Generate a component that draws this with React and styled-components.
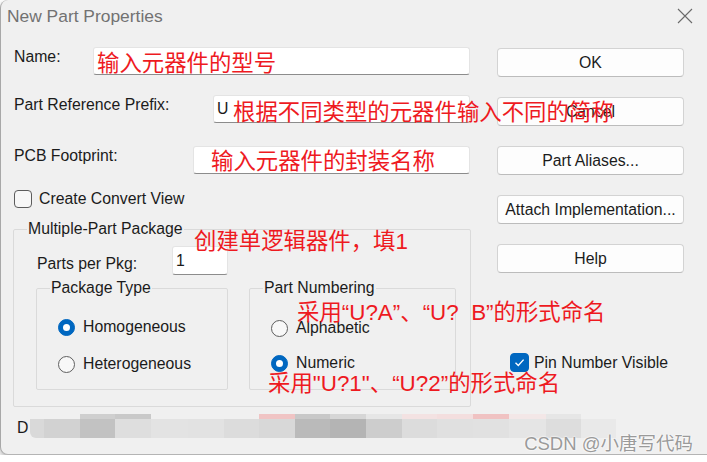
import React from 'react';
import styled, { createGlobalStyle } from 'styled-components';

const GlobalStyle = createGlobalStyle`
  html, body {
    margin: 0;
    padding: 0;
    background: #ffffff;
    overflow: hidden;
  }
  body {
    font-family: "Liberation Sans", Arial, sans-serif;
  }
`;

const TEXT = '15.8px';

const Window = styled.div`
  position: relative;
  width: 100%;
  height: 455px;
  box-sizing: border-box;
  background: #f0f0f0;
  border-left: 1px solid #a8a8a8;
  border-bottom: 1px solid #b4b4b4;
  border-radius: 8px 0 0 8px;
  box-shadow: 0 3px 6px rgba(0, 0, 0, 0.3);
  display: flex;
  flex-direction: column;
`;

const TitleBar = styled.div`
  height: 32px;
  flex-shrink: 0;
  display: flex;
  align-items: center;
  justify-content: space-between;
  padding: 0 14px 0 6px;
`;

const Title = styled.span`
  font-size: 17.4px;
  color: #727272;
`;

const Content = styled.div`
  display: flex;
  padding: 15px 0 0 12px;
`;

const LeftColumn = styled.div`
  width: 457px;
  display: flex;
  flex-direction: column;
`;

const RightColumn = styled.div`
  width: 187px;
  margin-left: 27px;
  padding-top: 1px;
  display: flex;
  flex-direction: column;
  gap: 20px;
`;

const FieldRow = styled.div`
  display: flex;
  align-items: flex-start;
  margin-top: ${({ $top }) => $top || 0}px;
`;

const Label = styled.span`
  width: ${({ $w }) => $w}px;
  flex-shrink: 0;
  padding: ${({ $pt }) => $pt || 1}px 0 0 1px;
  box-sizing: border-box;
  font-size: ${TEXT};
  color: #1b1b1b;
`;

const TextInput = styled.input`
  flex: ${({ $w }) => ($w ? 'none' : 1)};
  width: ${({ $w }) => ($w ? `${$w}px` : 'auto')};
  min-width: 0;
  height: ${({ $h }) => $h || 28}px;
  box-sizing: border-box;
  margin: 0;
  padding: 0 3px;
  border: 1px solid #e4e4e4;
  border-bottom: 1px solid #8c8c8c;
  border-radius: 3px;
  background: #ffffff;
  font-family: "Liberation Sans", Arial, sans-serif;
  font-size: ${TEXT};
  color: #1b1b1b;
  outline: none;
`;

const CheckRow = styled.label`
  display: flex;
  align-items: center;
  gap: ${({ $gap }) => $gap || 7}px;
  margin: ${({ $top }) => $top || 0}px 0 0 ${({ $left }) => $left || 0}px;
  font-size: ${TEXT};
  color: #1b1b1b;
`;

const Box = styled.span`
  width: ${({ $size }) => $size}px;
  height: ${({ $size }) => $size}px;
  box-sizing: border-box;
  border-radius: 4px;
  border: 1px solid ${({ $on }) => ($on ? '#0067c0' : '#5c5c5c')};
  background: ${({ $on }) => ($on ? '#0067c0' : '#f7f7f7')};
  display: grid;
  place-items: center;
  flex-shrink: 0;
`;

const GroupBox = styled.fieldset`
  margin: ${({ $top }) => $top || 0}px 0 0 0;
  padding: 0;
  width: ${({ $w }) => $w}px;
  box-sizing: border-box;
  min-width: 0;
  border: 1px solid #dadada;
  border-radius: 2px;
`;

const Legend = styled.legend`
  margin-left: 13px;
  padding: 0 1px;
  font-size: ${TEXT};
  line-height: 18px;
  color: #1b1b1b;
`;

const GroupBody = styled.div`
  display: flex;
  flex-direction: column;
  gap: ${({ $gap }) => $gap || 0}px;
  padding: ${({ $pad }) => $pad};
`;

const SubGroups = styled.div`
  display: flex;
  gap: 21px;
  margin-top: 4px;
`;

const RadioRow = styled.label`
  display: flex;
  align-items: center;
  gap: 8px;
  height: 20px;
  font-size: ${TEXT};
  color: #1b1b1b;
`;

const Radio = styled.span`
  width: 17px;
  height: 17px;
  box-sizing: border-box;
  border-radius: 50%;
  border: 1px solid ${({ $on }) => ($on ? '#0067c0' : '#5f5f5f')};
  background: ${({ $on }) => ($on ? '#0067c0' : '#f8f8f8')};
  display: grid;
  place-items: center;
  flex-shrink: 0;

  &::after {
    content: '';
    display: ${({ $on }) => ($on ? 'block' : 'none')};
    width: 7px;
    height: 7px;
    border-radius: 50%;
    background: #ffffff;
  }
`;

const Button = styled.button`
  width: 100%;
  height: 29px;
  margin: 0;
  padding: 0;
  background: #fdfdfd;
  border: 1px solid #d3d3d3;
  border-bottom-color: #bcbcbc;
  border-radius: 4px;
  font-family: "Liberation Sans", Arial, sans-serif;
  font-size: ${TEXT};
  color: #1b1b1b;
`;

const PinRow = styled(CheckRow)`
  margin-top: 60px;
`;

const BottomRow = styled.div`
  display: flex;
  align-items: flex-start;
  margin-top: 7px;
  padding-left: 16px;
`;

const Letter = styled.span`
  font-size: ${TEXT};
  line-height: 15px;
  margin-top: 6px;
  color: #1b1b1b;
`;

const Mosaic = styled.div`
  display: flex;
  margin-left: 2px;
  border-bottom-left-radius: 6px;
  overflow: hidden;
`;

const Tile = styled.div`
  width: ${({ $w }) => $w}px;
  display: flex;
  flex-direction: column;

  &::before {
    content: '';
    height: 5px;
    background: ${({ $top }) => $top};
  }

  &::after {
    content: '';
    height: 19px;
    background: ${({ $main }) => $main};
  }
`;

const Note = styled.span`
  position: absolute;
  left: ${({ $x }) => $x}px;
  top: ${({ $y }) => $y}px;
  font-family: "Liberation Sans", "Noto Sans CJK SC", sans-serif;
  font-size: 22.4px;
  line-height: 22px;
  color: #ee1a1f;
  white-space: pre;
  pointer-events: none;
`;

const Watermark = styled.span`
  position: absolute;
  right: 14px;
  bottom: 0px;
  font-family: "Liberation Sans", "Noto Sans CJK SC", sans-serif;
  font-size: 18.5px;
  line-height: 20px;
  color: #9a9a9a;
  text-shadow: 0 0 2px #ffffff, 0 0 2px #ffffff;
`;

const tiles = [
  { w: 14, top: 'transparent', main: '#d9d9d9' },
  { w: 36, top: 'transparent', main: '#d2d2d2' },
  { w: 35, top: '#cfcfcf', main: '#c2c2c2' },
  { w: 36, top: '#c9c9c9', main: '#dedede' },
  { w: 37, top: 'transparent', main: '#e3e3e3' },
  { w: 36, top: 'transparent', main: '#e2e2e2' },
  { w: 35, top: 'transparent', main: '#dcdcdc' },
  { w: 36, top: '#f0c4c4', main: '#d8d8d8' },
  { w: 35, top: '#c8c8c8', main: '#bababa' },
  { w: 36, top: '#d6d6d6', main: '#b4b4b4' },
  { w: 36, top: '#e6e6e6', main: '#cdcdcd' },
  { w: 35, top: '#f3e2e2', main: '#dcdcdc' },
  { w: 36, top: '#f3dede', main: '#e0e0e0' },
  { w: 36, top: '#f0c2c2', main: '#e1e1e1' },
  { w: 37, top: '#f3e7e7', main: '#e5e5e5' },
  { w: 35, top: '#e6e6e6', main: '#dddddd' },
  { w: 35, top: 'transparent', main: '#e9e9e9' },
];

const CloseIcon = () => (
  <svg width="16" height="16" viewBox="0 0 16 16">
    <path d="M1 1 L15 15 M15 1 L1 15" stroke="#6a6a6a" strokeWidth="1.1" fill="none" />
  </svg>
);

const CheckMark = () => (
  <svg width="13" height="13" viewBox="0 0 13 13">
    <path d="M2.5 6.8 L5.3 9.4 L10.6 3.6" stroke="#ffffff" strokeWidth="1.4" fill="none" />
  </svg>
);

export default function App() {
  return (
    <>
      <GlobalStyle />
      <Window>
        <TitleBar>
          <Title>New Part Properties</Title>
          <CloseIcon />
        </TitleBar>

        <Content>
          <LeftColumn>
            <FieldRow>
              <Label $w={80}>Name:</Label>
              <TextInput readOnly defaultValue="" />
            </FieldRow>
            <FieldRow $top={20}>
              <Label $w={200}>Part Reference Prefix:</Label>
              <TextInput readOnly defaultValue="U" />
            </FieldRow>
            <FieldRow $top={23}>
              <Label $w={180}>PCB Footprint:</Label>
              <TextInput readOnly defaultValue="" />
            </FieldRow>

            <CheckRow $top={16} $left={1}>
              <Box $size={18} />
              Create Convert View
            </CheckRow>

            <GroupBox $top={12} $w={458}>
              <Legend>Multiple-Part Package</Legend>
              <GroupBody $pad="8px 0 16px 22px">
                <FieldRow>
                  <Label $w={136} $pt={9}>Parts per Pkg:</Label>
                  <TextInput readOnly defaultValue="1" $w={56} $h={29} />
                </FieldRow>
                <SubGroups>
                  <GroupBox $w={192}>
                    <Legend>Package Type</Legend>
                    <GroupBody $gap={17} $pad="20px 0 15px 21px">
                      <RadioRow>
                        <Radio $on />
                        Homogeneous
                      </RadioRow>
                      <RadioRow>
                        <Radio />
                        Heterogeneous
                      </RadioRow>
                    </GroupBody>
                  </GroupBox>
                  <GroupBox $w={207}>
                    <Legend>Part Numbering</Legend>
                    <GroupBody $gap={15} $pad="21px 0 15px 21px">
                      <RadioRow>
                        <Radio />
                        Alphabetic
                      </RadioRow>
                      <RadioRow>
                        <Radio $on />
                        Numeric
                      </RadioRow>
                    </GroupBody>
                  </GroupBox>
                </SubGroups>
              </GroupBody>
            </GroupBox>
          </LeftColumn>

          <RightColumn>
            <Button>OK</Button>
            <Button>Cancel</Button>
            <Button>Part Aliases...</Button>
            <Button>Attach Implementation...</Button>
            <Button>Help</Button>
            <PinRow $left={13} $gap={5}>
              <Box $size={19} $on>
                <CheckMark />
              </Box>
              Pin Number Visible
            </PinRow>
          </RightColumn>
        </Content>

        <BottomRow>
          <Letter>D</Letter>
          <Mosaic>
            {tiles.map((t, i) => (
              <Tile key={i} $w={t.w} $top={t.top} $main={t.main} />
            ))}
          </Mosaic>
        </BottomRow>

        <Note $x={96} $y={53}>输入元器件的型号</Note>
        <Note $x={232} $y={102}>根据不同类型的元器件输入不同的简称</Note>
        <Note $x={210} $y={151}>输入元器件的封装名称</Note>
        <Note $x={193} $y={231}>创建单逻辑器件，填1</Note>
        <Note $x={296} $y={302}>采用“U?A”、“U?  B”的形式命名</Note>
        <Note $x={267} $y={373}>采用"U?1"、“U?2”的形式命名</Note>
        <Watermark>CSDN @小唐写代码</Watermark>
      </Window>
    </>
  );
}
